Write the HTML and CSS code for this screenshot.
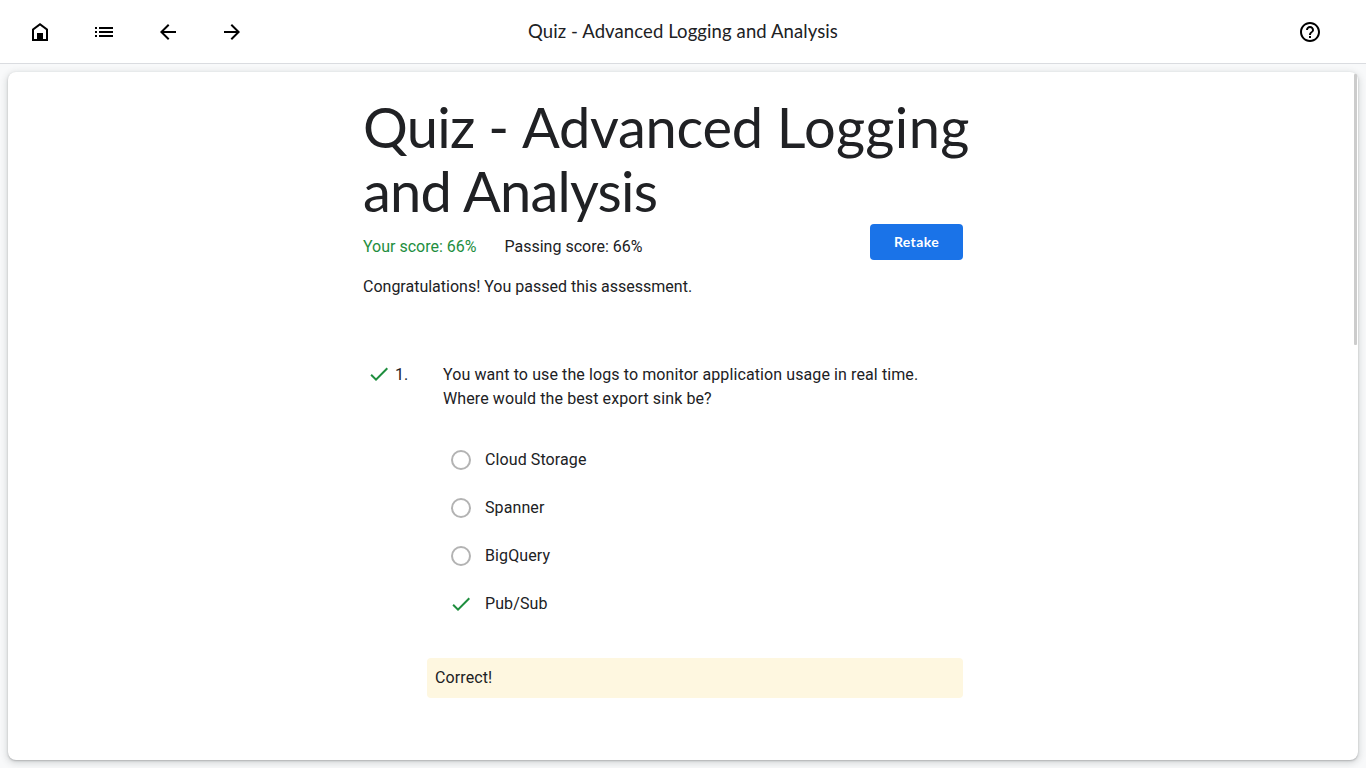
FILE: index.html
```html
<!DOCTYPE html>
<html lang="en">
<head>
<meta charset="utf-8">
<title>Quiz - Advanced Logging and Analysis</title>
<link rel="stylesheet" href="styles.css">
</head>
<body>
<header class="toolbar">
  <nav class="toolbar-nav">
    <a class="icon-button"><svg class="icon" viewBox="0 0 24 24"><path d="M4 21V9l8-6 8 6v12H4zm2-2h3v-6h6v6h3v-9l-6-4.5L6 10z"/></svg></a>
    <a class="icon-button"><svg class="icon" viewBox="0 0 24 24"><path d="M3 7h2v2H3zm0 4h2v2H3zm0 4h2v2H3zM7 7h14v2H7zm0 4h14v2H7zm0 4h14v2H7z"/></svg></a>
    <a class="icon-button"><svg class="icon" viewBox="0 0 24 24"><path d="M20 11H7.83l5.59-5.59L12 4l-8 8 8 8 1.41-1.41L7.83 13H20z"/></svg></a>
    <a class="icon-button"><svg class="icon" viewBox="0 0 24 24"><path d="M12 4l-1.41 1.41L16.17 11H4v2h12.17l-5.58 5.59L12 20l8-8z"/></svg></a>
  </nav>
  <div class="toolbar-title">Quiz - Advanced Logging and Analysis</div>
  <a class="icon-button help"><svg class="icon" viewBox="0 0 24 24"><path d="M11 18h2v-2h-2v2zm1-16C6.480 2 2 6.480 2 12s4.480 10 10 10 10-4.480 10-10S17.520 2 12 2zm0 18c-4.410 0-8-3.590-8-8s3.590-8 8-8 8 3.590 8 8-3.590 8-8 8zm0-14c-2.210 0-4 1.790-4 4h2c0-1.100.9-2 2-2s2 .9 2 2c0 2-3 1.750-3 5h2c0-2.250 3-2.500 3-5 0-2.210-1.790-4-4-4z"/></svg></a>
</header>
<main class="card">
  <div class="content">
    <h1 class="title">Quiz - <span class="title-mid">Advanced </span><span class="title-wide">Logging</span><br><span class="title-second">and Analysis</span></h1>
    <div class="scores">
      <span class="score passed">Your score: 66%</span>
      <span class="score">Passing score: 66%</span>
      <button class="retake">Retake</button>
    </div>
    <p class="message">Congratulations! You passed this assessment.</p>
    <section class="question">
      <svg class="check" viewBox="0 0 24 24"><path d="M9 16.170L4.830 12l-1.420 1.410L9 19 21 7l-1.410-1.410z"/></svg>
      <span class="number">1.</span>
      <p class="stem">You want to use the logs to monitor application usage in real time.<br>Where would the best export sink be?</p>
    </section>
    <ul class="options">
      <li class="option"><span class="radio"></span>Cloud Storage</li>
      <li class="option"><span class="radio"></span>Spanner</li>
      <li class="option"><span class="radio"></span>BigQuery</li>
      <li class="option"><svg class="check" viewBox="0 0 24 24"><path d="M9 16.170L4.830 12l-1.420 1.410L9 19 21 7l-1.410-1.410z"/></svg>Pub/Sub</li>
    </ul>
    <div class="feedback">Correct!</div>
  </div>
  <div class="scroll-thumb"></div>
</main>
</body>
</html>
```
FILE: styles.css
```css
* { box-sizing: border-box; }
body {
  margin: 0;
  height: 768px;
  overflow: hidden;
  display: flex;
  flex-direction: column;
  background: #f8f9fa;
  color: #202124;
  font: 16px/24px Roboto, sans-serif;
  letter-spacing: 0.1px;
}
.toolbar {
  height: 64px;
  flex: none;
  display: grid;
  grid-template-columns: 1fr auto 1fr;
  align-items: center;
  padding: 0 32px 0 16px;
  background: #fff;
  border-bottom: 1px solid #dadce0;
}
.toolbar-nav { display: flex; gap: 16px; }
.icon-button { width: 48px; height: 48px; display: grid; place-items: center; }
.icon { width: 24px; height: 24px; fill: #000; display: block; }
.help { justify-self: end; }
.toolbar-title { font: 18.5px/24px Lato, sans-serif; letter-spacing: 0.1px; margin: 0 0 2px 16px; }
.card {
  position: relative;
  flex: 1;
  margin: 8px;
  background: #fff;
  border-radius: 8px;
  box-shadow: 0 1px 2px rgba(60, 64, 67, .3), 0 2px 6px 2px rgba(60, 64, 67, .15);
}
.content { width: 600px; margin-left: 355px; padding-top: 23px; }
.title { margin: 0; font: 400 56px/64px Lato, sans-serif; letter-spacing: -0.7px; white-space: nowrap; }
.title-mid { letter-spacing: -0.3px; }
.title-wide { letter-spacing: 0.4px; }
.title-second { letter-spacing: -0.75px; }
.scores { display: flex; height: 36px; align-items: flex-start; margin-top: 1px; letter-spacing: 0; }
.score { margin: 11px 28px 0 0; }
.passed { color: #1e8e3e; }
.retake {
  width: 93px;
  height: 36px;
  margin-left: auto;
  padding: 0;
  border: 0;
  border-radius: 4px;
  background: #1a73e8;
  color: #fff;
  font: 700 14px/36px Lato, sans-serif;
  letter-spacing: 0.4px;
}
.message { margin: 15px 0 0; letter-spacing: 0; }
.question { display: flex; padding: 64px 0 0 4px; }
.check { width: 24px; height: 24px; fill: #1e8e3e; flex: none; }
.question .check { margin-top: -1px; }
.number { width: 48px; margin-left: 4px; }
.stem { margin: 0; white-space: nowrap; }
.options { list-style: none; margin: 25px 0 0 86px; padding: 0; }
.option { display: flex; align-items: center; height: 48px; gap: 12px; }
.radio { width: 20px; height: 20px; margin: 0 2px; border: 2px solid #b3b3b3; border-radius: 50%; }
.feedback { height: 40px; margin: 30px 0 0 64px; padding: 8px; border-radius: 4px; background: #fef7e0; }
.scroll-thumb { position: absolute; right: 1px; top: 2px; width: 3px; height: 271px; background: #ccc; border-radius: 1px; }
```
